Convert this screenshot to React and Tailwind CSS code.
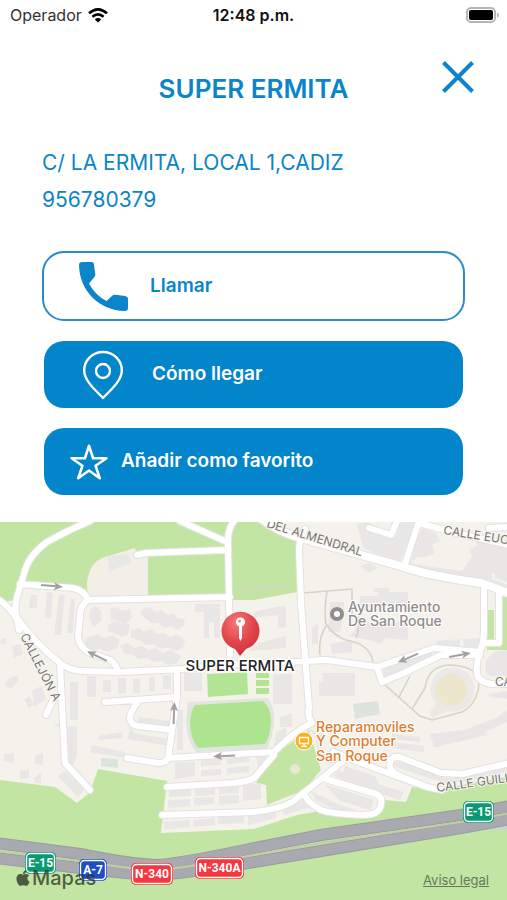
import { FaApple } from 'react-icons/fa';
import { IoStarOutline } from 'react-icons/io5';

const store = {
  name: 'SUPER ERMITA',
  address: 'C/ LA ERMITA, LOCAL 1,CADIZ',
  phone: '956780379',
};

// ── Map data ───────────────────────────────────────────────────
const parks = [
  'M0 522H233L228 540L230 597L88 600L73 588L20 583L15 600L0 602Z',
  'M233 522H257L301 537L297 592L254 600H232L228 540Z',
  'M0 780L55 787L77 803L90 792L98 769L167 781L161 833L254 829L297 815L321 811L364 817L382 810L384 800L406 802L412 787L434 790L507 777V900H0Z',
  'M309 730L321 770L304 790L267 805L266 785L256 783L274 755Z',
  'M487 610H494V641H487ZM501 597H507V650H487V643H501Z',
];

const buildings = [
  // block between the two curved streets on the left
  'M31 595h6v13h-8zM47 592l6 1-2 25h-6zM59 594l6 1-4 40h-7zM71 598l4 1-2 34h-6zM108 556l20-2 4 9-16 5-7 5z',
  // terraced houses
  'M90 609l6-3 5 5 1 9-8 7-5-8zM110 609l6-2 6 4 8-2 2 8-7 8-8-4-6-1z',
  'M108 625l7-4 7 3 8 0-1 9-7 4-8-4-6-2z',
  'M142 610l7-3 7 5 6-2 5 5 6-2 5 5 6 1 1 6-7 5-7-4-7 2-6-5-7 0-6-5-4-3z',
  'M131 630l8-2 5 4 7-3 6 5 7-1 6 4 6-3 9 6-2 8-7 3-8-4-7 2-7-5-8 1-7-5-8-3z',
  'M86 638l12-4 6 4 9-3 7 5-3 8-9 4-8-3-8 2-7-5z',
  'M120 646l8-3 6 5 8-2 6 4 8-2 7 5 8-3 10 6-4 7-8 2-8-4-7 1-7-4-8 1-7-5-7 0z',
  'M195 604h25v34h-6v-16h-5v16h-5v-26h-9zM254 612l22-5 10-1v21l-8 1v-13l-24 3zM250 645l36-9v12l-36 3z',
  // small houses south of the main street
  'M87 676h9v21h-9zM103 680h8v12h-8zM118 678h8v15h-8zM133 679h7v14h-7zM149 677h6v14h-6zM163 675h8v14h-8zM184 673h18v18h-18zM273 674h19v30h-19z',
  'M70 682h8v38h-8zM55 726h22v30l-5 12-6-8V724h-11zM58 776l7-5 20 18-7 8z',
  'M10 678l8-3v6l-7 8-7-4zM2 638h4v6h-6zM12 647l8-3 3 10-9 4zM32 690l10-4 4 13-12 8zM24 700l5-4 5 8-5 4z',
  'M4 754l10-1v10l-10-2zM20 771l9-1v8l-9 1zM35 756l8-3v12l-8-1zM34 778l7-5v10h-6z',
  'M138 717l34 4v8l-34-6zM130 725l4 8 34 6v7l-40-7zM98 736l24-4v6l-23 2zM92 745l33 7v6l-35-6zM177 710h6v40h-6z',
  'M175 762h20v14l-20 3zM201 760l20-1v6l-20 1zM201 770l20-1v6l-20 1zM227 758l22-2v6l-22 2zM227 768l22-2v6l-22 2zM256 756l12-1-10 14z',
  'M169 790l22-1v7l-22 1zM195 789l20-1v7l-20 1zM219 787l20-2v8l-20 1zM168 800l22-1v7l-22 2zM194 798l20-1v7l-20 2zM219 796l20-1v8l-20 2zM243 785l18-2v16l-18 2z',
  'M164 822l26-2v7l-26 3zM193 820l22-2v7l-22 2zM218 817l26-1v7l-26 1zM248 816l28-6v8l-28 7zM281 807l25-8 5 8-27 8z',
  // town hall and its surroundings
  'M330 602h14v12l-4 18h-12zM378 592h-4v-4h15v4h19v18h-48v-14h18zM362 622h46v18l-22-2-6 6-12-4-18-4zM330 644l22-4v12l-20 2zM360 566l10-3 8 5-9 5zM312 628l6-4v20h-6zM322 673h33v23h-36v-14h4z',
  'M383 669l48-17 4 7-51 20zM436 641l24-2v10l-20 2zM463 639l21-1v10l-20 1z',
  'M357 524l10-2 28 16 5-16h14l-3 14-12 28-36-16z',
  'M422 528l14 5 4 8-8 4 2 8-8 4-8 0-8 6 22 4 30 4 10-14-2-8 8-4-6-8 20 6 34 10v8l-20-2v16l-14-2 0 6 37 14v8l-24-10-66-18-36-7z',
  'M498 560l9-2v24l-12-4v-12z',
  'M486 660l8-8 13-2v26h-18l-4-6zM430 734l34-4 32-12 11-8v12l-22 10 3 3-44 10-4 2h-6zM489 694l18-3v8l-18-2zM392 734l28 3v5l-28-3zM392 742l32 4v6l-32-4z',
  'M345 766l30 10 4 8-36-9zM338 770l46 16 20 6-4 8-46-15-20-9zM324 784l50 16-4 10-30-9zM312 792l26 12 18 6-20 0-20-9z',
  'M393 762l14 1 38 15 18-2 34-8 10-2v6l-44 10-20 1-50-17zM308 728l14 6v18l16 6-8 6-12-6-2-20z',
  'M280 717l12-4v14h-12zM276 732l10-4v14l-12 4z',
];

const footpaths = [
  'M303 593L352 589V616M327 591Q324 612 326 624Q334 636 346 640Q370 644 373 662M326 626Q318 638 320 655M358 616V632L356 638',
  'M384 684L412 709L425 688Q428 666 450 665Q478 666 479 684Q477 704 462 712L432 720L420 716L412 709M410 676L399 697',
  'M235 588H254L292 586M262 588V598',
];

const streets = [
  'M90 521Q68 530 47 542Q28 556 24 574L17 597Q14 607 17 618Q35 643 60 663Q70 671 84 671L120 672L183 669L240 664L327 660L377 667L434 648L480 652',
  'M20 584L73 588Q84 590 88 600L230 597',
  'M88 600Q79 606 80 617L78 636Q79 646 88 652L110 660Q116 664 118 671',
  'M137 555L146 553L226 550',
  'M180 521Q200 530 227 542',
  'M234 521Q227 530 228 545L230 655',
  'M-4 598Q10 606 17 620L19 630',
  'M60 663L65 763L90 790',
  'M53 700L46 715',
  'M177 670V697L105 702',
  'M137 703Q129 714 130 719Q131 725 138 726L172 730',
  'M177 697L168 758L254 753L274 752Q296 730 312 723Q307 715 309 708L301 603L299 550Q299 540 305 529',
  'M127 758L158 763Q166 763 168 758',
  'M262 519Q278 532 301 538L404 567Q430 576 481 583Q494 587 510 594',
  'M419 521L404 567M397 521L391 535L369 528',
  'M419 523L456 533L510 545M507 527L489 528',
  'M484 587V630Q484 644 479 653Q475 672 478 677Q482 683 492 684H510',
  'M499 592V643H487',
  'M377 667L382 682L404 673L441 655L480 655',
  'M162 815L254 812Q280 809 292 802L311 787L342 762',
  'M333 752L377 769L427 787L442 790',
  'M427 787L400 776Q386 770 391 760Q394 755 402 758L441 773L462 774L510 763',
  'M322 778L376 794Q384 798 380 808Q377 815 364 815Q332 814 321 810Q308 803 306 797',
  'M167 787L233 783Q246 782 254 778L274 755',
];

const mainRoad = streets[13];

const carriageways = [
  'M-4 843L80 854Q130 864 155 865Q180 864 254 848L321 835L461 815L511 806',
  'M-4 858L80 868Q130 874 155 875Q180 874 254 862L321 851L461 828L511 819',
];

const arrows = [
  { x: 52, y: 586, angle: 5 },
  { x: 97, y: 656, angle: 206 },
  { x: 174, y: 713, angle: -88 },
  { x: 224, y: 756, angle: 178 },
  { x: 408, y: 658, angle: 157 },
  { x: 460, y: 655, angle: -10 },
];

const shields = [
  { label: 'E-15', x: 25, y: 852, width: 31, color: '#0a9a72' },
  { label: 'A-7', x: 79, y: 859, width: 28, color: '#1d4fc4' },
  { label: 'N-340', x: 131, y: 863, width: 42, color: '#f5373f' },
  { label: 'N-340A', x: 195, y: 857, width: 49, color: '#f5373f' },
  { label: 'E-15', x: 463, y: 801, width: 31, color: '#0a9a72' },
];

function StatusBar() {
  return (
    <div className="grid h-[30px] grid-cols-3 items-center px-2 text-black">
      <div className="flex items-center gap-1.5 pl-0.5 text-base text-[#333]">
        <span>Operador</span>
        <svg viewBox="0 0 20 15" className="h-[15px] w-5" fill="none" stroke="#000" strokeWidth="2.6" aria-hidden="true">
          <path d="M1 5.3Q10 -2.6 19 5.3" />
          <path d="M4.4 8.8Q10 4 15.6 8.8" />
          <path d="M10 14.6L6.8 11.4Q10 8.8 13.2 11.4Z" fill="#000" stroke="none" />
        </svg>
      </div>
      <span className="text-center text-base font-semibold text-[#111]">12:48 p.m.</span>
      <svg viewBox="0 0 33 16" className="h-4 w-[33px] justify-self-end" aria-label="Batería">
        <rect x="1" y="1" width="28" height="14" rx="4" fill="#fff" stroke="#b5b5b5" strokeWidth="2" />
        <rect x="3" y="3" width="24" height="10" rx="2" fill="#000" />
        <path d="M31 5.5q2 .5 2 2.5t-2 2.5z" fill="#b5b5b5" />
      </svg>
    </div>
  );
}

function PhoneIcon() {
  return (
    <svg viewBox="0 0 49 49" className="size-[49px]" fill="currentColor" aria-hidden="true">
      <path d="M3 0H12.500Q15 0 15 3L16.300 12Q16.500 14 15 15.500L10 21.500Q16 33 27.500 39L33.500 33.500Q34.500 32.500 36.500 32.700L46 34Q49 34.500 49 37V46Q49 49 46 49C20 48.500 0.500 29 0 3Q0 0 3 0Z" />
    </svg>
  );
}

function PinIcon() {
  return (
    <svg viewBox="0 0 42 50" className="h-[50px] w-[42px]" fill="none" stroke="currentColor" strokeWidth="2.4" strokeLinejoin="round" aria-hidden="true">
      <path d="M21 48C14 40.500 2.200 31 2.200 20.500A18.800 18.500 0 0 1 39.800 20.500C39.800 31 28 40.500 21 48Z" />
      <circle cx="21" cy="21" r="7" />
    </svg>
  );
}

function Arrow({ x, y, angle }) {
  return (
    <g transform={`translate(${x} ${y}) rotate(${angle})`} fill="#a3a19f" stroke="#a3a19f">
      <path d="M-11 0H4" strokeWidth="2" />
      <path d="M2 -4L11 0L2 4L4 0Z" stroke="none" />
    </g>
  );
}

function Shield({ label, x, y, width, color }) {
  return (
    <g>
      <rect x={x} y={y} width={width} height="22" rx="5" fill={color} />
      <rect x={x + 1.5} y={y + 1.5} width={width - 3} height="19" rx="4" fill="none" stroke="#fff" strokeWidth="1.4" />
      <text x={x + width / 2} y={y + 15} textAnchor="middle" fill="#fff" className="font-['Roboto',sans-serif] text-[12px] font-bold">
        {label}
      </text>
    </g>
  );
}

function StoreMap() {
  return (
    <svg viewBox="0 522 507 378" className="block w-full" role="img" aria-label={`Mapa de ${store.name}`}>
      <defs>
        <radialGradient id="pin" cx="0.4" cy="0.25" r="0.8">
          <stop offset="0" stopColor="#f4787a" />
          <stop offset="0.55" stopColor="#e2454b" />
          <stop offset="1" stopColor="#cf2f38" />
        </radialGradient>
      </defs>

      <rect y="522" width="507" height="378" fill="#f5f2eb" />
      <path d={parks.join('')} fill="#c2e5a3" />
      <path d="M88 600L87 583Q89 562 105 557L135 548L137 555H148V598Z" fill="#f3efe6" />

      {/* Buildings */}
      <path d={buildings.join('')} fill="#e8e7e5" />
      <path d="M101 758l17 1 0 9-17-2zM353 704l25-3 2 13-25 5z" fill="#dde4dc" />

      {/* Sports ground and lawns */}
      <path d="M188 702L268 698Q274 706 274 720Q273 738 267 749L196 752Q187 742 186 722Z" fill="#e0e5de" />
      <path d="M195 705L263 701Q271 708 271 720Q270 738 265 744L198 748Q190 738 190 722Q191 710 195 705Z" fill="#aee48f" />
      <path d="M207 674L247 672L248 694L208 697ZM256 673h13v5h-13zM256 680h13v6h-13zM256 688h13v6h-13z" fill="#b1e593" />

      <path d={footpaths.join('')} fill="none" stroke="#d8d3ca" strokeWidth="1.6" />
      <path d="M432 718L430 712L436 704A22 22 0 1 1 448 711Z" fill="#e9e9e6" />
      <circle cx="451" cy="690" r="16" fill="#ece6cd" />
      <circle cx="295" cy="769" r="5" fill="#e6e9d3" />

      {/* Streets: casing first, then the white surface */}
      <g fill="none" strokeLinecap="round" strokeLinejoin="round">
        <path d={streets.join('')} stroke="#e2e2e3" strokeWidth="8" />
        <path d={mainRoad} stroke="#e2e2e3" strokeWidth="10" />
        <path d={streets.join('')} stroke="#fff" strokeWidth="6" />
        <path d={mainRoad} stroke="#fff" strokeWidth="8" />
      </g>

      {/* Motorway */}
      <g fill="none">
        <path d="M461 829Q485 828 511 827" stroke="#cfd0d3" strokeWidth="4" />
        <path d={carriageways.join('')} stroke="#9a9ba0" strokeWidth="12" />
        <path d={carriageways.join('')} stroke="#a9a9b0" strokeWidth="10" />
        <path d="M-4 851L80 861Q130 869 155 870Q180 869 254 855L321 843L461 822L511 813" stroke="#c0cda8" strokeWidth="2" />
      </g>

      {arrows.map((a) => (
        <Arrow key={`${a.x}-${a.y}`} {...a} />
      ))}

      {/* Street names */}
      <g fill="#77756f" stroke="#f7f5f0" strokeWidth="2" paintOrder="stroke" className="text-[12px]">
        <text transform="translate(20 636) rotate(63)">CALLEJÓN A</text>
        <text transform="translate(266 527) rotate(17)">DEL ALMENDRAL</text>
        <text transform="translate(443 534) rotate(9)">CALLE EUCALIPTO</text>
        <text transform="translate(495 686)">CALLE</text>
        <text transform="translate(437 792) rotate(-8)">CALLE GUILLÉN</text>
      </g>

      {/* Points of interest */}
      <circle cx="337" cy="614" r="5" fill="#fff" stroke="#918f8c" strokeWidth="4" />
      <g fill="#8f8d8a" stroke="#fff" strokeWidth="2" paintOrder="stroke" className="text-[14px] font-medium">
        <text x="348" y="612">Ayuntamiento</text>
        <text x="348" y="626">De San Roque</text>
      </g>

      <circle cx="304" cy="741" r="9" fill="#fbb11b" stroke="#fff" strokeWidth="1" />
      <path d="M299.500 737.500h9v6h-9zM304 744v3M301 746.500h6" fill="none" stroke="#fff" strokeWidth="1.3" />
      <g fill="#dd7d31" stroke="#fff" strokeWidth="2" paintOrder="stroke" className="text-[14px] font-medium">
        <text x="316" y="732">Reparamoviles</text>
        <text x="316" y="746">Y Computer</text>
        <text x="316" y="761">San Roque</text>
      </g>

      {shields.map((s) => (
        <Shield key={`${s.label}-${s.x}`} {...s} />
      ))}

      {/* Store marker */}
      <path d="M240 656L235 649A19 19 0 1 1 246 649Z" fill="url(#pin)" />
      <path d="M239 626h3v12l-1.500 3l-1.500 -3z" fill="#fff" />
      <circle cx="240.500" cy="622" r="4.600" fill="#fff" />
      <circle cx="239.500" cy="621" r="1.500" fill="#ef8a8c" />
      <text x="240" y="671" textAnchor="middle" fill="#222" stroke="#fff" strokeWidth="3" paintOrder="stroke" className="text-[15px] font-medium">
        {store.name}
      </text>
    </svg>
  );
}

export default function App() {
  return (
    <div className="flex min-h-screen flex-col bg-white font-['Inter',sans-serif] text-[#0b84ca]">
      <StatusBar />

      <main className="flex flex-1 flex-col">
        <header className="grid grid-cols-[1fr_auto_1fr] items-start px-7 pt-[27px]">
          <h1 className="col-start-2 pt-3.5 text-[26px] leading-9 font-semibold">{store.name}</h1>
          <button type="button" aria-label="Cerrar" className="mr-px justify-self-end p-0.5">
            <svg viewBox="0 0 36 36" className="size-9" fill="none" stroke="currentColor" strokeWidth="4" aria-hidden="true">
              <path d="M3.500 3.500L32.500 32.500M32.500 3.500L3.500 32.500" />
            </svg>
          </button>
        </header>

        <div className="px-[42px] pt-[37px] text-[21px] leading-[37px]">
          <p>{store.address}</p>
          <p>{store.phone}</p>
        </div>

        <div className="flex flex-col gap-5 px-11 pt-[33px] pb-[27px] text-[19px] font-semibold">
          <button type="button" className="-mx-0.5 flex h-[70px] items-center gap-[22px] rounded-[22px] border-2 border-[#2a8ccb] pl-[35px]">
            <PhoneIcon />
            Llamar
          </button>
          <button type="button" className="flex h-[67px] items-center gap-7 rounded-[20px] bg-[#0285cb] pl-[38px] text-white">
            <PinIcon />
            Cómo llegar
          </button>
          <button type="button" className="flex h-[67px] items-center gap-3 rounded-[20px] bg-[#0285cb] pl-[25px] text-white">
            <IoStarOutline className="size-10" aria-hidden="true" />
            Añadir como favorito
          </button>
        </div>

        <section className="relative">
          <StoreMap />
          <div className="absolute bottom-2 left-3.5 flex items-center text-xl text-[#2c3a28]/80">
            <FaApple className="size-[18px]" aria-hidden="true" />
            <span className="font-medium">Mapas</span>
          </div>
          <a href="#aviso-legal" className="absolute right-[18px] bottom-2.5 text-[13px] text-[#68785a] underline">
            Aviso legal
          </a>
        </section>
      </main>
    </div>
  );
}
